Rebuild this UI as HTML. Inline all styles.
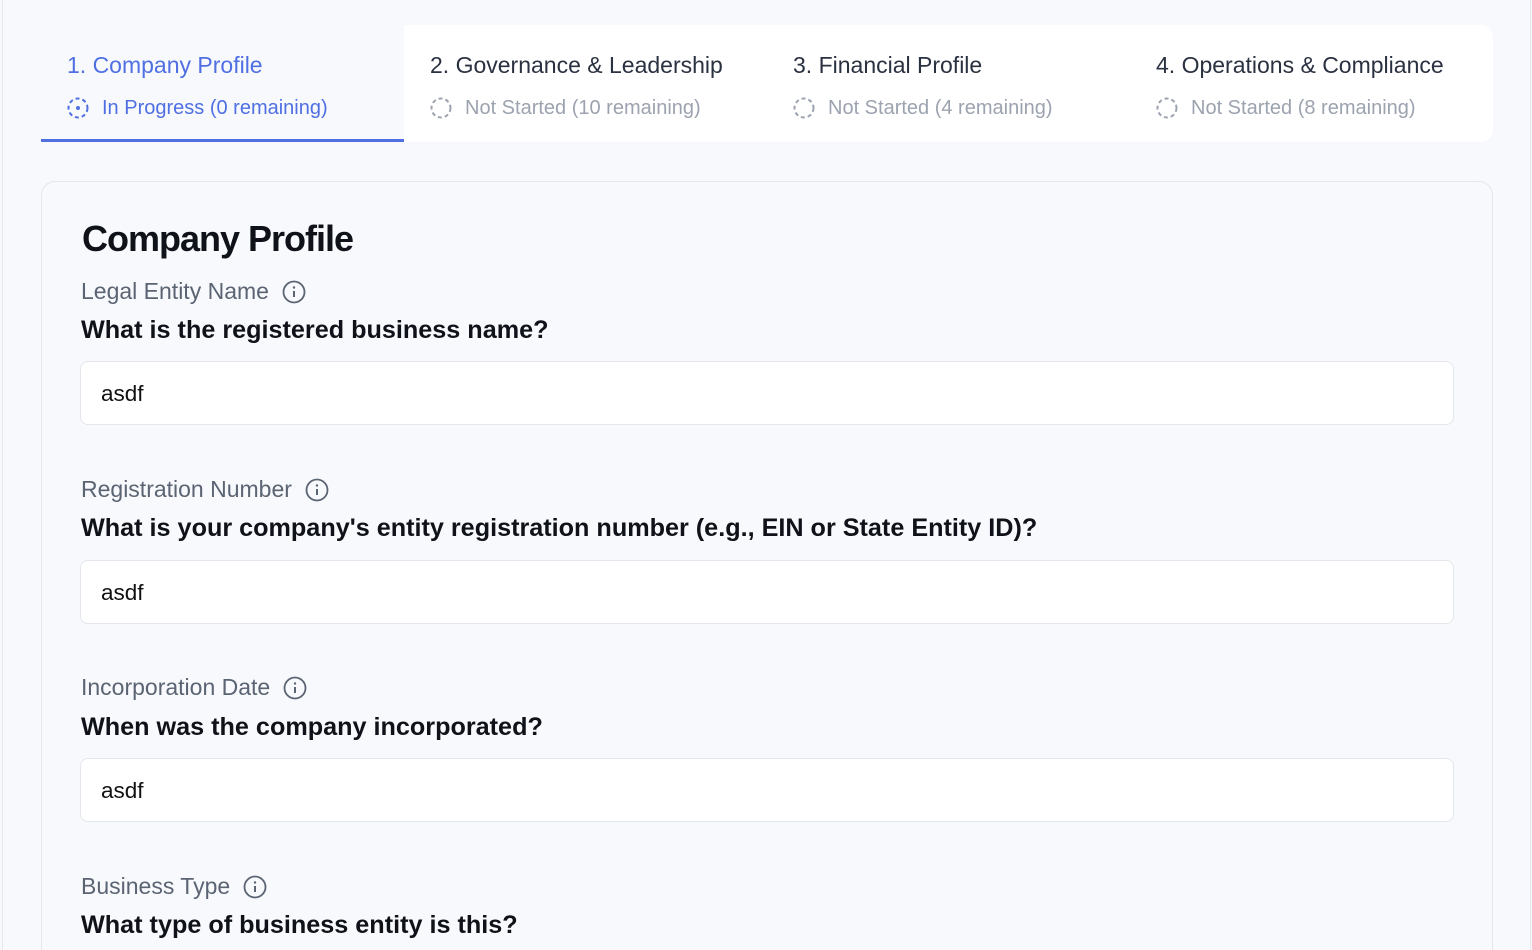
<!DOCTYPE html>
<html><head><meta charset="utf-8"><style>
*{box-sizing:border-box;margin:0;padding:0}
html{overflow:hidden;height:950px}
body{width:1532px;height:950px;overflow:hidden;background:#f8f9fc;font-family:"Liberation Sans",Arial,sans-serif;position:relative}
.lb{position:absolute;left:2px;top:0;width:1px;height:950px;background:#e6e8ee}
.rb{position:absolute;left:1530px;top:0;width:1px;height:950px;background:#e6e8ee}
.tabs{position:absolute;left:41px;top:25px;width:1452px;height:117px;background:#fff;border-radius:12px 12px 12px 0;display:flex;overflow:hidden}
.tab{width:363px;height:117px;padding:26px 0 0 26px;position:relative;white-space:nowrap}
.tab.active{background:#f8f9fc}
.tab.active:after{content:"";position:absolute;left:0;bottom:0;width:363px;height:3px;background:#4f6fe3}
.t{font-size:23px;color:#2a3140;line-height:28px}
.s{font-size:20px;color:#9ca3af;margin-top:17px;display:flex;align-items:center;line-height:24px}
.s svg{margin-right:13px}
.active .t,.active .s{color:#4f6fe3}
.card{position:absolute;left:41px;top:181px;width:1452px;height:790px;border:1px solid #e3e6ec;border-radius:14px;background:#f8f9fc}
h1{position:absolute;left:40px;top:36px;font-size:36px;letter-spacing:-1px;color:#0f1219;font-weight:700}
.lab{position:absolute;left:39px;font-size:23px;color:#5b6473;display:flex;align-items:center}
.lab svg{margin-left:13px}
.q{position:absolute;left:39px;font-size:25.2px;font-weight:700;color:#0f1219;white-space:nowrap}
.in{position:absolute;left:38px;width:1374px;height:64px;background:#fff;border:1px solid #e3e6ec;border-radius:8px;font-size:22.5px;color:#111;padding:19px 0 0 20px}
</style></head><body>
<div class="lb"></div><div class="rb"></div>
<div class="tabs">
<div class="tab active"><div class="t">1. Company Profile</div><div class="s"><svg width="22" height="22" viewBox="0 0 22 22"><circle cx="11" cy="11" r="9.5" fill="none" stroke="#4f6fe3" stroke-width="2" stroke-dasharray="4 3"/><circle cx="11" cy="11" r="2" fill="#4f6fe3"/></svg>In Progress (0 remaining)</div></div>
<div class="tab"><div class="t">2. Governance &amp; Leadership</div><div class="s"><svg width="22" height="22" viewBox="0 0 22 22"><circle cx="11" cy="11" r="9.5" fill="none" stroke="#9ca3af" stroke-width="2" stroke-dasharray="4 3"/></svg>Not Started (10 remaining)</div></div>
<div class="tab"><div class="t">3. Financial Profile</div><div class="s"><svg width="22" height="22" viewBox="0 0 22 22"><circle cx="11" cy="11" r="9.5" fill="none" stroke="#9ca3af" stroke-width="2" stroke-dasharray="4 3"/></svg>Not Started (4 remaining)</div></div>
<div class="tab"><div class="t">4. Operations &amp; Compliance</div><div class="s"><svg width="22" height="22" viewBox="0 0 22 22"><circle cx="11" cy="11" r="9.5" fill="none" stroke="#9ca3af" stroke-width="2" stroke-dasharray="4 3"/></svg>Not Started (8 remaining)</div></div>
</div>
<div class="card">
<h1>Company Profile</h1>
<div class="lab" style="top:96px">Legal Entity Name<svg width="24" height="24" viewBox="0 0 24 24"><circle cx="12" cy="12" r="10.5" fill="none" stroke="#5b6473" stroke-width="1.8"/><line x1="12" y1="11" x2="12" y2="17" stroke="#5b6473" stroke-width="2"/><circle cx="12" cy="7.5" r="1.2" fill="#5b6473"/></svg></div>
<div class="q" style="top:134px">What is the registered business name?</div>
<div class="in" style="top:179px">asdf</div>
<div class="lab" style="top:294px">Registration Number<svg width="24" height="24" viewBox="0 0 24 24"><circle cx="12" cy="12" r="10.5" fill="none" stroke="#5b6473" stroke-width="1.8"/><line x1="12" y1="11" x2="12" y2="17" stroke="#5b6473" stroke-width="2"/><circle cx="12" cy="7.5" r="1.2" fill="#5b6473"/></svg></div>
<div class="q" style="top:332px">What is your company's entity registration number (e.g., EIN or State Entity ID)?</div>
<div class="in" style="top:378px">asdf</div>
<div class="lab" style="top:492px">Incorporation Date<svg width="24" height="24" viewBox="0 0 24 24"><circle cx="12" cy="12" r="10.5" fill="none" stroke="#5b6473" stroke-width="1.8"/><line x1="12" y1="11" x2="12" y2="17" stroke="#5b6473" stroke-width="2"/><circle cx="12" cy="7.5" r="1.2" fill="#5b6473"/></svg></div>
<div class="q" style="top:531px">When was the company incorporated?</div>
<div class="in" style="top:576px">asdf</div>
<div class="lab" style="top:691px">Business Type<svg width="24" height="24" viewBox="0 0 24 24"><circle cx="12" cy="12" r="10.5" fill="none" stroke="#5b6473" stroke-width="1.8"/><line x1="12" y1="11" x2="12" y2="17" stroke="#5b6473" stroke-width="2"/><circle cx="12" cy="7.5" r="1.2" fill="#5b6473"/></svg></div>
<div class="q" style="top:729px">What type of business entity is this?</div>
</div>
</body></html>
